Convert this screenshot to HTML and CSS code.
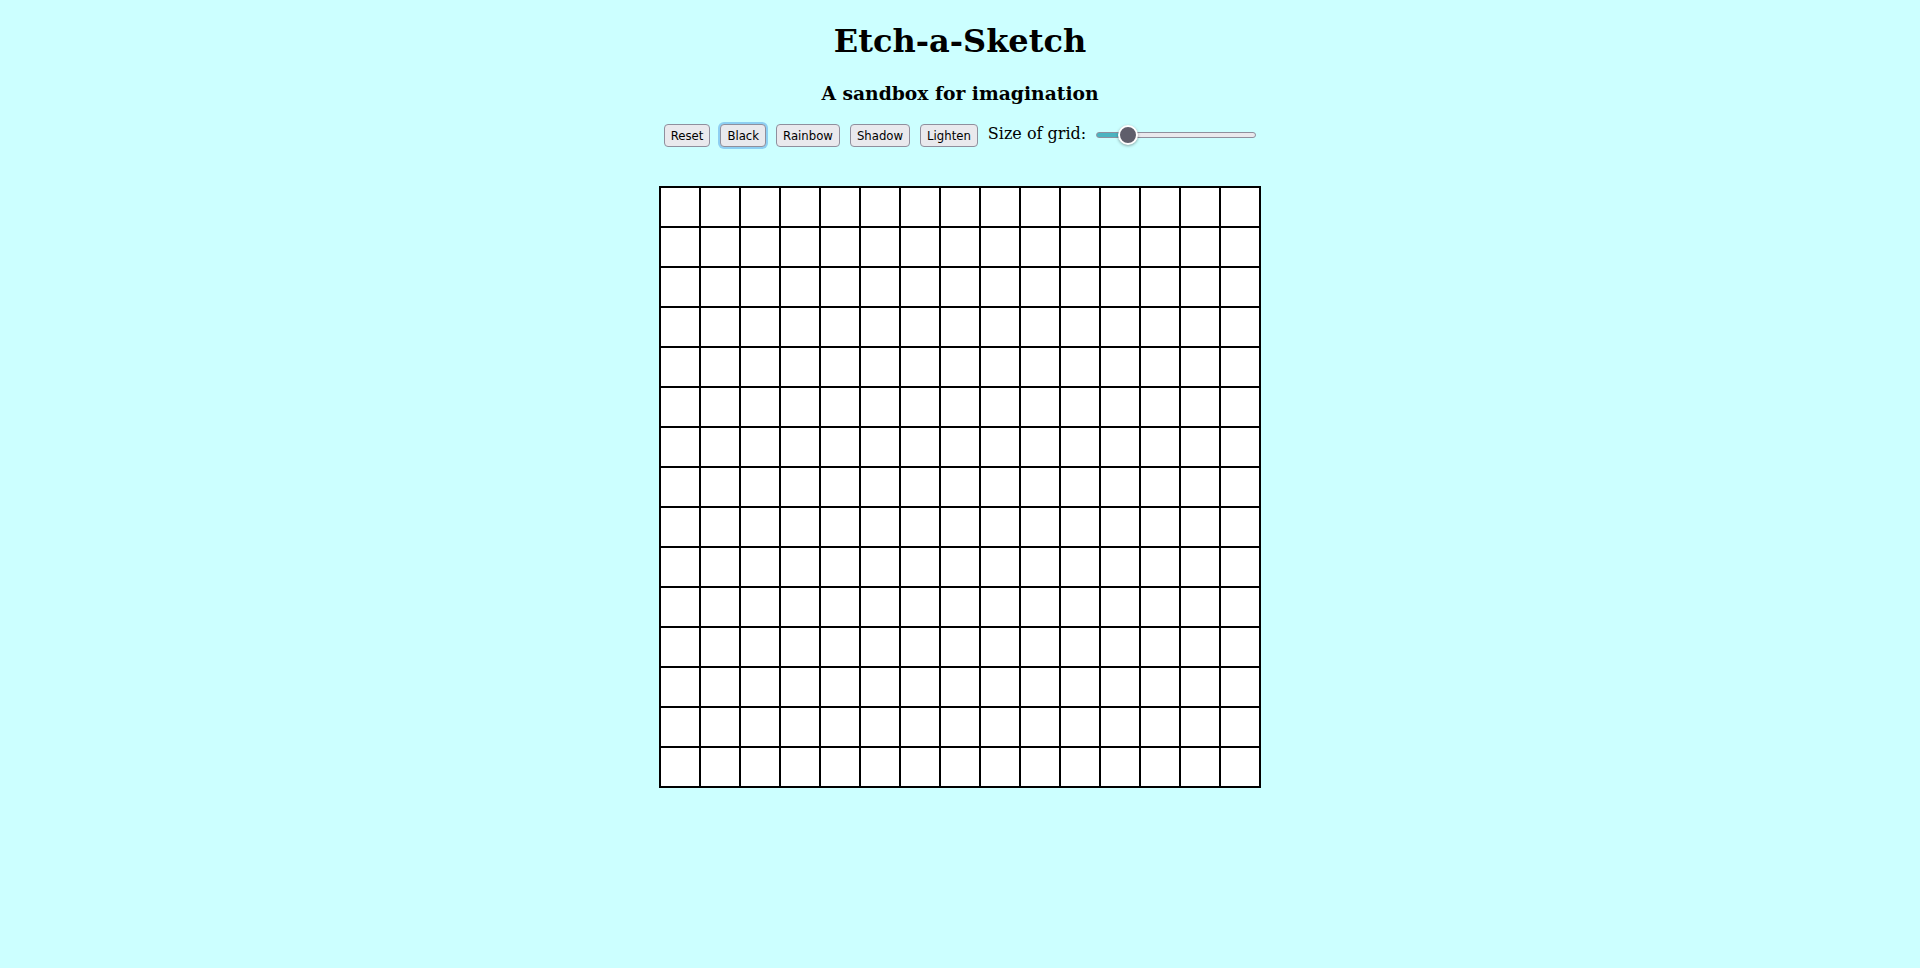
FILE: index.html
```html
<!DOCTYPE html>
<html lang="en">
<head>
<meta charset="utf-8">
<title>Etch-a-Sketch</title>
<link rel="stylesheet" href="styles.css">
</head>
<body>
<h1 class="title">Etch-a-Sketch</h1>
<h3 class="subtitle">A sandbox for imagination</h3>
<div class="controls">
  <button class="btn">Reset</button>
  <button class="btn btn-active">Black</button>
  <button class="btn">Rainbow</button>
  <button class="btn">Shadow</button>
  <button class="btn">Lighten</button>
  <label class="size-label" for="size">Size of grid:</label>
  <input class="slider" id="size" type="range" min="1" max="100" value="16">
</div>
<div class="board">
<div class="cell"></div><div class="cell"></div><div class="cell"></div><div class="cell"></div><div class="cell"></div><div class="cell"></div><div class="cell"></div><div class="cell"></div><div class="cell"></div><div class="cell"></div><div class="cell"></div><div class="cell"></div><div class="cell"></div><div class="cell"></div><div class="cell"></div>
<div class="cell"></div><div class="cell"></div><div class="cell"></div><div class="cell"></div><div class="cell"></div><div class="cell"></div><div class="cell"></div><div class="cell"></div><div class="cell"></div><div class="cell"></div><div class="cell"></div><div class="cell"></div><div class="cell"></div><div class="cell"></div><div class="cell"></div>
<div class="cell"></div><div class="cell"></div><div class="cell"></div><div class="cell"></div><div class="cell"></div><div class="cell"></div><div class="cell"></div><div class="cell"></div><div class="cell"></div><div class="cell"></div><div class="cell"></div><div class="cell"></div><div class="cell"></div><div class="cell"></div><div class="cell"></div>
<div class="cell"></div><div class="cell"></div><div class="cell"></div><div class="cell"></div><div class="cell"></div><div class="cell"></div><div class="cell"></div><div class="cell"></div><div class="cell"></div><div class="cell"></div><div class="cell"></div><div class="cell"></div><div class="cell"></div><div class="cell"></div><div class="cell"></div>
<div class="cell"></div><div class="cell"></div><div class="cell"></div><div class="cell"></div><div class="cell"></div><div class="cell"></div><div class="cell"></div><div class="cell"></div><div class="cell"></div><div class="cell"></div><div class="cell"></div><div class="cell"></div><div class="cell"></div><div class="cell"></div><div class="cell"></div>
<div class="cell"></div><div class="cell"></div><div class="cell"></div><div class="cell"></div><div class="cell"></div><div class="cell"></div><div class="cell"></div><div class="cell"></div><div class="cell"></div><div class="cell"></div><div class="cell"></div><div class="cell"></div><div class="cell"></div><div class="cell"></div><div class="cell"></div>
<div class="cell"></div><div class="cell"></div><div class="cell"></div><div class="cell"></div><div class="cell"></div><div class="cell"></div><div class="cell"></div><div class="cell"></div><div class="cell"></div><div class="cell"></div><div class="cell"></div><div class="cell"></div><div class="cell"></div><div class="cell"></div><div class="cell"></div>
<div class="cell"></div><div class="cell"></div><div class="cell"></div><div class="cell"></div><div class="cell"></div><div class="cell"></div><div class="cell"></div><div class="cell"></div><div class="cell"></div><div class="cell"></div><div class="cell"></div><div class="cell"></div><div class="cell"></div><div class="cell"></div><div class="cell"></div>
<div class="cell"></div><div class="cell"></div><div class="cell"></div><div class="cell"></div><div class="cell"></div><div class="cell"></div><div class="cell"></div><div class="cell"></div><div class="cell"></div><div class="cell"></div><div class="cell"></div><div class="cell"></div><div class="cell"></div><div class="cell"></div><div class="cell"></div>
<div class="cell"></div><div class="cell"></div><div class="cell"></div><div class="cell"></div><div class="cell"></div><div class="cell"></div><div class="cell"></div><div class="cell"></div><div class="cell"></div><div class="cell"></div><div class="cell"></div><div class="cell"></div><div class="cell"></div><div class="cell"></div><div class="cell"></div>
<div class="cell"></div><div class="cell"></div><div class="cell"></div><div class="cell"></div><div class="cell"></div><div class="cell"></div><div class="cell"></div><div class="cell"></div><div class="cell"></div><div class="cell"></div><div class="cell"></div><div class="cell"></div><div class="cell"></div><div class="cell"></div><div class="cell"></div>
<div class="cell"></div><div class="cell"></div><div class="cell"></div><div class="cell"></div><div class="cell"></div><div class="cell"></div><div class="cell"></div><div class="cell"></div><div class="cell"></div><div class="cell"></div><div class="cell"></div><div class="cell"></div><div class="cell"></div><div class="cell"></div><div class="cell"></div>
<div class="cell"></div><div class="cell"></div><div class="cell"></div><div class="cell"></div><div class="cell"></div><div class="cell"></div><div class="cell"></div><div class="cell"></div><div class="cell"></div><div class="cell"></div><div class="cell"></div><div class="cell"></div><div class="cell"></div><div class="cell"></div><div class="cell"></div>
<div class="cell"></div><div class="cell"></div><div class="cell"></div><div class="cell"></div><div class="cell"></div><div class="cell"></div><div class="cell"></div><div class="cell"></div><div class="cell"></div><div class="cell"></div><div class="cell"></div><div class="cell"></div><div class="cell"></div><div class="cell"></div><div class="cell"></div>
<div class="cell"></div><div class="cell"></div><div class="cell"></div><div class="cell"></div><div class="cell"></div><div class="cell"></div><div class="cell"></div><div class="cell"></div><div class="cell"></div><div class="cell"></div><div class="cell"></div><div class="cell"></div><div class="cell"></div><div class="cell"></div><div class="cell"></div>
</div>
</body>
</html>
```
FILE: styles.css
```css
html, body {
  background: #ccffff;
}
body {
  margin: 0;
  padding: 0;
  font-family: "DejaVu Serif", serif;
  color: #000;
  text-align: center;
}
.title {
  font-size: 32px;
  font-weight: bold;
  margin: 22px 0 22px;
}
.subtitle {
  font-size: 18.72px;
  font-weight: bold;
  margin: 0 0 19.7px;
}
.controls {
  display: flex;
  justify-content: center;
  align-items: center;
  gap: 10px;
}
.btn {
  font-family: "DejaVu Sans Condensed", "DejaVu Sans", sans-serif;
  font-stretch: condensed;
  font-size: 13px;
  line-height: 17px;
  color: #000;
  background: #e9e9ed;
  border: 1px solid #8f8f9d;
  border-radius: 4px;
  padding: 2px 6px;
  margin: 0;
}
.btn-active {
  box-shadow: 0 0 0 2px #8ecff2;
}
.size-label {
  font-size: 16px;
  margin-top: -4px;
}
.slider {
  -webkit-appearance: none;
  appearance: none;
  box-sizing: border-box;
  width: 160px;
  height: 6px;
  margin: 0;
  border: 1px solid #8f8f9d;
  border-radius: 3px;
  background: linear-gradient(to right, #4bb3c0 0, #4bb3c0 20%, #e9e9ed 20%);
}
.slider::-webkit-slider-thumb {
  -webkit-appearance: none;
  appearance: none;
  width: 20px;
  height: 20px;
  border-radius: 50%;
  background: #5f5e6b;
  border: 2px solid #fff;
  box-shadow: 0 1px 3px rgba(0, 0, 0, 0.35);
  box-sizing: border-box;
}
.board {
  width: 600px;
  display: grid;
  grid-template-columns: repeat(15, 40px);
  grid-auto-rows: 40px;
  border: 1px solid #000;
  margin: 39px auto 0;
  background: #fff;
}
.cell {
  box-sizing: border-box;
  border: 1px solid #000;
  background: #fff;
}
```
